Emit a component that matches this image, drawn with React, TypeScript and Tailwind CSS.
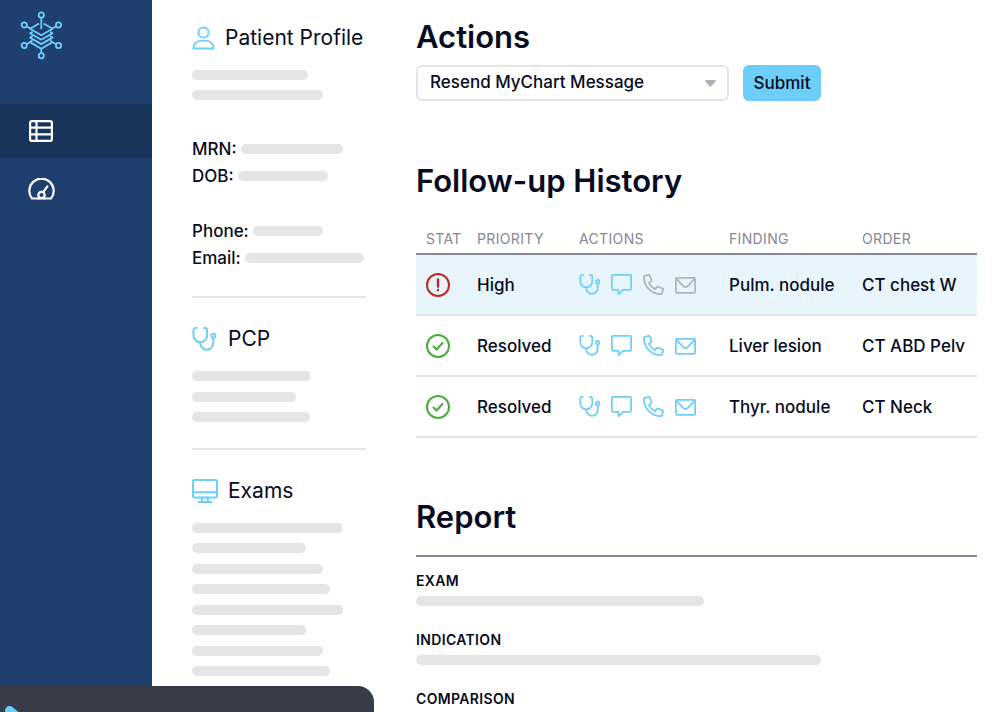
import type { ReactNode } from 'react';

type IconName = 'user' | 'stethoscope' | 'monitor' | 'chat' | 'phone' | 'mail';

const profileBars = ['w-[116px]', 'w-[131px]'];
const pcpBars = ['w-[119px]', 'w-[104px]', 'w-[118px]'];
const examBars = [
	'w-[151px]',
	'w-[114px]',
	'w-[131px]',
	'w-[138px]',
	'w-[151px]',
	'w-[114px]',
	'w-[131px]',
	'w-[138px]',
];

const contactGroups = [
	[
		{ label: 'MRN:', width: 'w-[102px]' },
		{ label: 'DOB:', width: 'w-[90px]' },
	],
	[
		{ label: 'Phone:', width: 'w-[70px]' },
		{ label: 'Email:', width: 'w-[119px]' },
	],
];

const followUps = [
	{ resolved: false, priority: 'High', pending: ['phone', 'mail'], finding: 'Pulm. nodule', order: 'CT chest W' },
	{ resolved: true, priority: 'Resolved', pending: [], finding: 'Liver lesion', order: 'CT ABD Pelv' },
	{ resolved: true, priority: 'Resolved', pending: [], finding: 'Thyr. nodule', order: 'CT Neck' },
];

const rowActions: { name: IconName; label: string }[] = [
	{ name: 'stethoscope', label: 'Notify provider' },
	{ name: 'chat', label: 'Send message' },
	{ name: 'phone', label: 'Call patient' },
	{ name: 'mail', label: 'Send letter' },
];

const App = () => {
	return (
		<div className="flex min-h-screen bg-white font-['Inter',sans-serif] text-[17px] leading-6 font-medium text-[#070b1f]">
			<Sidebar />
			<div className="flex min-w-0 grow gap-[50px] pl-10 pr-[23px]">
				<PatientPanel />
				<main className="min-w-0 grow pt-[17px]">
					<Actions />
					<FollowUpHistory />
					<Report />
				</main>
			</div>
			<div className="fixed bottom-0 left-0 h-[26px] w-[374px] overflow-hidden rounded-tr-2xl bg-[#373c49]">
				<svg className="mt-5 ml-[5px] h-[6px] w-4" viewBox="0 0 16 6" fill="none" stroke="#6dcff9" strokeWidth="9" strokeLinecap="round">
					<path d="M4.5 4.5 16 14" />
				</svg>
			</div>
		</div>
	);
};

const Sidebar = () => {
	return (
		<nav className="w-[152px] shrink-0 bg-[#1f3f6f]">
			<div className="h-[104px] pt-[11px] pl-5">
				<Logo />
			</div>
			<a href="#worklist" aria-label="Worklist" className="flex h-[54px] items-center bg-[#19345b] pl-[29px]">
				<svg className="h-[22px] w-6" viewBox="0 0 24 22" fill="none" stroke="white" strokeWidth="2.2">
					<rect x="1.1" y="1.1" width="21.8" height="19.8" rx="2" />
					<path d="M7.5 1v20M1 7.6h22M1 14.4h22" />
				</svg>
			</a>
			<a href="#dashboard" aria-label="Dashboard" className="flex h-[61px] items-center pl-7">
				<svg className="h-[22px] w-[27px]" viewBox="0 0 27 22" fill="none" stroke="white" strokeWidth="2.2" strokeLinecap="round" strokeLinejoin="round">
					<path d="M10.5 20.5H4A12.2 12.2 0 1 1 23 20.5h-6.5" />
					<path d="M10.5 20.5h6M15.2 14.2 19.4 8.4" />
					<circle cx="13.5" cy="17" r="3.2" />
				</svg>
			</a>
		</nav>
	);
};

const PatientPanel = () => {
	return (
		<aside className="w-[174px] shrink-0 pt-6">
			<PanelTitle icon={<Icon name="user" className="h-6 w-[23px]" />}>Patient Profile</PanelTitle>
			<div className="mt-[18px] space-y-[10px]">
				{profileBars.map((width, index) => (
					<Bar key={index} className={width} />
				))}
			</div>
			<div className="mt-[37px] space-y-[31px]">
				{contactGroups.map((group, index) => (
					<dl key={index} className="space-y-[3px]">
						{group.map((item) => (
							<div key={item.label} className="flex items-center gap-1">
								<dt>{item.label}</dt>
								<dd>
									<Bar className={item.width} />
								</dd>
							</div>
						))}
					</dl>
				))}
			</div>
			<section className="mt-[26px] border-t-2 border-[#e4e5e7] pt-[27px]">
				<PanelTitle icon={<Icon name="stethoscope" className="h-6 w-[26px]" />}>PCP</PanelTitle>
				<div className="mt-[18px] flex h-[51px] flex-col justify-between">
					{pcpBars.map((width, index) => (
						<Bar key={index} className={width} />
					))}
				</div>
			</section>
			<section className="mt-[26px] border-t-2 border-[#e4e5e7] pt-[27px]">
				<PanelTitle icon={<Icon name="monitor" className="h-6 w-[26px]" />}>Exams</PanelTitle>
				<div className="mt-[18px] flex h-[153px] flex-col justify-between">
					{examBars.map((width, index) => (
						<Bar key={index} className={width} />
					))}
				</div>
			</section>
		</aside>
	);
};

const PanelTitle = ({ icon, children }: { icon: ReactNode; children: ReactNode }) => {
	return (
		<h2 className="flex h-7 items-center gap-2.5 text-[21px] leading-7 font-normal whitespace-nowrap">
			<span className="text-[#6dcff9]">{icon}</span>
			{children}
		</h2>
	);
};

const Actions = () => {
	return (
		<section>
			<h1 className="text-[31px] leading-10 font-semibold">Actions</h1>
			<form className="mt-2 flex gap-[14px]" onSubmit={(e) => e.preventDefault()}>
				<div className="relative w-[313px]">
					<select
						aria-label="Action"
						defaultValue="resend"
						className="h-9 w-full appearance-none rounded-md border-2 border-[#e4e5e7] bg-white pr-8 pb-0.5 pl-3"
					>
						<option value="resend">Resend MyChart Message</option>
						<option value="call">Call Patient</option>
						<option value="letter">Send Letter</option>
					</select>
					<svg className="pointer-events-none absolute top-[15px] right-[13px] h-[7px] w-[11px] text-[#b0b1b8]" viewBox="0 0 11 7" fill="currentColor">
						<path d="M1 0h9a1 1 0 0 1 .7 1.6L6.4 6.2a1.2 1.2 0 0 1-1.8 0L.3 1.6A1 1 0 0 1 1 0z" />
					</svg>
				</div>
				<button type="submit" className="h-9 w-[78px] rounded-md bg-[#6dcff9]">
					Submit
				</button>
			</form>
		</section>
	);
};

const FollowUpHistory = () => {
	return (
		<section className="mt-[60px]">
			<h1 className="text-[31px] leading-10 font-semibold">Follow-up History</h1>
			<table className="mt-6 w-full table-fixed text-left whitespace-nowrap">
				<thead className="text-[14px] tracking-wide text-[#858792]">
					<tr className="h-[29px] border-b-2 border-[#858792]">
						<th className="w-[61px] pl-2.5 font-normal">STAT</th>
						<th className="w-[102px] font-normal">PRIORITY</th>
						<th className="w-[150px] font-normal">ACTIONS</th>
						<th className="w-[133px] font-normal">FINDING</th>
						<th className="font-normal">ORDER</th>
					</tr>
				</thead>
				<tbody>
					{followUps.map((row) => (
						<tr key={row.finding} className="h-[61px] border-b-2 border-[#e4e5e7] first:bg-[#e9f5fc]">
							<td className="pl-2.5">
								<StatusIcon resolved={row.resolved} />
							</td>
							<td>{row.priority}</td>
							<td>
								<div className="flex gap-[11px]">
									{rowActions.map((action) => (
										<button
											key={action.name}
											type="button"
											aria-label={action.label}
											className={row.pending.includes(action.name) ? 'text-[#b0b4bb]' : 'text-[#6dcff9]'}
										>
											<Icon name={action.name} className="size-[21px]" />
										</button>
									))}
								</div>
							</td>
							<td>{row.finding}</td>
							<td>{row.order}</td>
						</tr>
					))}
				</tbody>
			</table>
		</section>
	);
};

const Report = () => {
	return (
		<section className="mt-[59px]">
			<h1 className="text-[31px] leading-10 font-semibold">Report</h1>
			<div className="mt-[18px] border-t-2 border-[#858792] pt-[14px]">
				<ReportHeading>EXAM</ReportHeading>
				<Bar className="mt-[5px] w-[288px]" />
				<div className="mt-6">
					<ReportHeading>INDICATION</ReportHeading>
					<Bar className="mt-[5px] w-[405px]" />
				</div>
				<div className="mt-6">
					<ReportHeading>COMPARISON</ReportHeading>
				</div>
			</div>
		</section>
	);
};

const ReportHeading = ({ children }: { children: ReactNode }) => {
	return <h2 className="text-[14px] leading-5 font-semibold tracking-wide">{children}</h2>;
};

const Bar = ({ className }: { className: string }) => {
	return <div className={`h-[10px] rounded-full bg-[#e4e5e7] ${className}`} />;
};

const StatusIcon = ({ resolved }: { resolved: boolean }) => {
	return (
		<svg
			className={resolved ? 'size-6 text-[#47ad37]' : 'size-6 text-[#bd2820]'}
			viewBox="0 0 24 24"
			fill="none"
			stroke="currentColor"
			strokeWidth="2"
			strokeLinecap="round"
			strokeLinejoin="round"
		>
			<circle cx="12" cy="12" r="11" />
			{resolved ? <path d="m7.5 12.5 3 3 6-6.5" /> : <path d="M12 6.5v7M12 17v.2" strokeWidth="2.4" />}
		</svg>
	);
};

const Icon = ({ name, className }: { name: IconName; className: string }) => {
	return (
		<svg
			className={className}
			viewBox={name === 'monitor' ? '0 0 26 24' : '0 0 24 24'}
			preserveAspectRatio="xMinYMid meet"
			fill="none"
			stroke="currentColor"
			strokeWidth="2"
			strokeLinecap="round"
			strokeLinejoin="round"
		>
			{name === 'user' && (
				<>
					<circle cx="12" cy="6.3" r="5.3" />
					<path d="M1.5 23c0-4.8 3.300-8.300 8-8.300h5c4.700 0 8 3.500 8 8.300z" />
				</>
			)}
			{name === 'stethoscope' && (
				<>
					<path d="M4.500 1H3.500a2 2 0 0 0-2 2v5.500a6.800 6.800 0 0 0 13.600 0V3a2 2 0 0 0-2-2h-1" />
					<path d="M8.300 15.500v.7a6.500 6.500 0 0 0 13 0V11" />
					<circle cx="21.300" cy="8.800" r="2" />
				</>
			)}
			{name === 'monitor' && (
				<>
					<rect x="1" y="1" width="24" height="17.500" rx="1.500" />
					<path d="M1 13.300h24M10.500 18.500l-.7 4.500M15.500 18.500l.7 4.500M6.500 23h13" />
				</>
			)}
			{name === 'chat' && (
				<path d="M2.500 1h19A1.500 1.500 0 0 1 23 2.500v14a1.500 1.500 0 0 1-1.500 1.500H14l-5.500 5V18h-6A1.500 1.500 0 0 1 1 16.500v-14A1.500 1.500 0 0 1 2.500 1z" />
			)}
			{name === 'phone' && (
				<path d="M2 2.200 5.800 1a1.600 1.600 0 0 1 2 .9l1.800 4.600a1.600 1.600 0 0 1-.5 1.900L6.800 10.300a14 14 0 0 0 7 7l1.800-2.300a1.600 1.600 0 0 1 1.900-.5l4.500 1.900a1.600 1.600 0 0 1 .9 1.900l-1.100 3.600a1.600 1.600 0 0 1-1.600 1.100A19.400 19.400 0 0 1 1 3.700a1.600 1.600 0 0 1 1-1.500z" />
			)}
			{name === 'mail' && (
				<>
					<rect x="1" y="4.500" width="22" height="17" rx="1.500" />
					<path d="m1.800 5.500 7.700 8.300a3.400 3.400 0 0 0 5 0l7.700-8.300" />
				</>
			)}
		</svg>
	);
};

const Logo = () => {
	return (
		<svg className="h-[49px] w-[43px]" viewBox="0 0 43 49" fill="none" stroke="#6dcff9" strokeWidth="1.8" strokeLinejoin="round">
			<circle cx="21.3" cy="4" r="2.6" />
			<circle cx="4.2" cy="14" r="2.6" />
			<circle cx="38.5" cy="14" r="2.6" />
			<circle cx="4.2" cy="34.5" r="2.6" />
			<circle cx="38.5" cy="34.5" r="2.6" />
			<circle cx="21.3" cy="44.7" r="2.6" />
			<path d="M21.3 6.600v11.700M21.300 42v-4M6.500 15.300l4.300 2.500M36.200 15.300l-4.300 2.500M6.500 33.200l4.300-2.500M36.200 33.200l-4.300-2.500" />
			<path d="m19 12.500-8.900 5.300 11.200 6.500 11.200-6.500-8.900-5.300" />
			<path d="M12.500 20.700 10.100 22.200l11.200 6.500 11.200-6.500-2.400-1.500M12.500 25.100l-2.400 1.500 11.200 6.500 11.200-6.500-2.400-1.500M12.500 29.500l-2.400 1.600 11.200 6.600 11.200-6.600-2.400-1.600" />
		</svg>
	);
};

export default App;
